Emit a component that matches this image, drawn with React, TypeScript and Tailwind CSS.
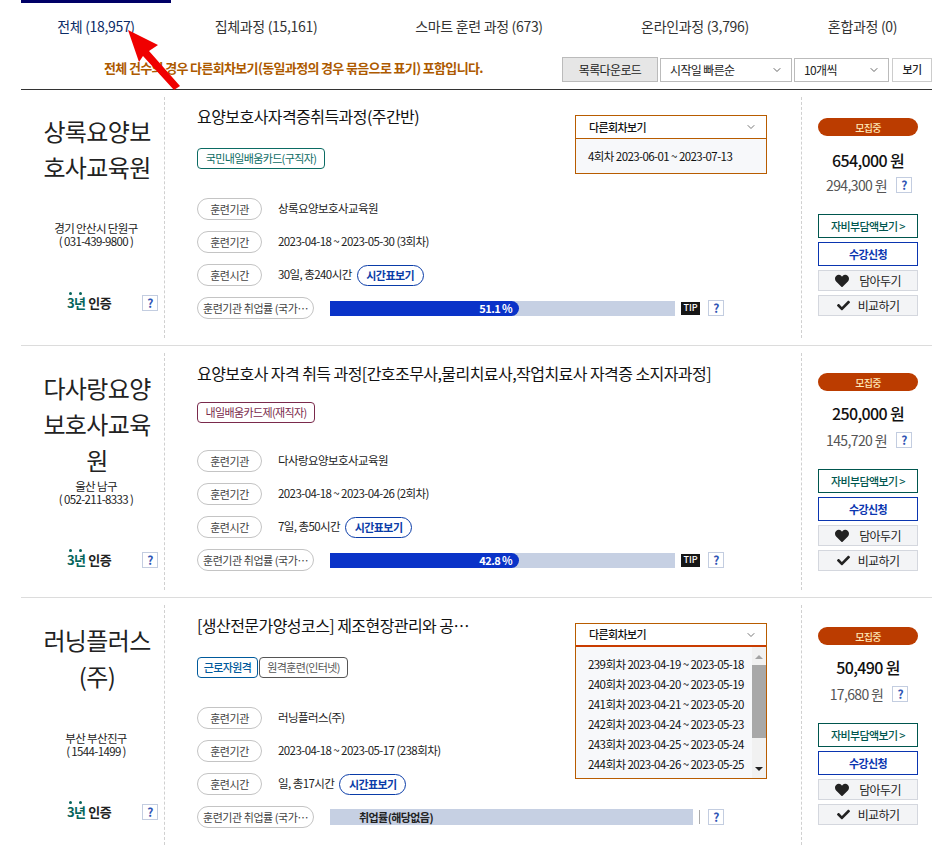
import { ChevronDown } from "lucide-react";
import { FaCheck, FaHeart } from "react-icons/fa";

const tabs = [
  { label: "전체 (18,957)", active: true },
  { label: "집체과정 (15,161)" },
  { label: "스마트 훈련 과정 (673)" },
  { label: "온라인과정 (3,796)" },
  { label: "혼합과정 (0)" },
];

const courses = [
  {
    name: "상록요양보호사교육원",
    address: "경기 안산시 단원구",
    phone: "( 031-439-9800 )",
    title: "요양보호사자격증취득과정(주간반)",
    tags: [{ label: "국민내일배움카드(구직자)", className: "border-[#0b6b63] text-[#0b6b63] w-[128px]" }],
    period: "2023-04-18 ~ 2023-05-30 (3회차)",
    hours: "30일, 총240시간",
    price: "654,000 원",
    sub: "294,300 원",
    rate: "51.1 %",
    rounds: ["4회차 2023-06-01 ~ 2023-07-13"],
    height: "h-[256px]",
    namePad: "pt-[16px]",
    addrGap: "mt-[37px]",
    certGap: "mt-[47px]",
    titlePad: "pt-[15px]",
    tagGap: "mt-[21px]",
    infoGap: "mt-[29px]",
    pricePad: "pt-[21px]",
    priceGap: "mt-[12px]",
    subGap: "mt-[3px]",
  },
  {
    name: "다사랑요양보호사교육원",
    address: "울산 남구",
    phone: "( 052-211-8333 )",
    title: "요양보호사 자격 취득 과정[간호조무사,물리치료사,작업치료사 자격증 소지자과정]",
    tags: [{ label: "내일배움카드제(재직자)", className: "border-[#7a2a4c] text-[#7a2a4c] w-[118px]" }],
    period: "2023-04-18 ~ 2023-04-26 (2회차)",
    hours: "7일, 총50시간",
    price: "250,000 원",
    sub: "145,720 원",
    rate: "42.8 %",
    rounds: [],
    height: "h-[252px]",
    namePad: "pt-[17px]",
    addrGap: "mt-[2px]",
    certGap: "mt-[46px]",
    titlePad: "pt-[16px]",
    tagGap: "mt-[18px]",
    infoGap: "mt-[27px]",
    pricePad: "pt-[20px]",
    priceGap: "mt-[10px]",
    subGap: "mt-[5px]",
  },
  {
    name: "러닝플러스(주)",
    address: "부산 부산진구",
    phone: "( 1544-1499 )",
    title: "[생산전문가양성코스] 제조현장관리와 공정개선 실무 과정",
    tags: [
      { label: "근로자원격", className: "border-[#005a9c] text-[#005a9c] w-[61px] font-medium" },
      { label: "원격훈련(인터넷)", className: "border-[#555] text-[#555] w-[89px]" },
    ],
    period: "2023-04-18 ~ 2023-05-17 (238회차)",
    hours: "일, 총17시간",
    price: "50,490 원",
    sub: "17,680 원",
    rate: "",
    rounds: [
      "239회차 2023-04-19 ~ 2023-05-18",
      "240회차 2023-04-20 ~ 2023-05-19",
      "241회차 2023-04-21 ~ 2023-05-20",
      "242회차 2023-04-24 ~ 2023-05-23",
      "243회차 2023-04-25 ~ 2023-05-24",
      "244회차 2023-04-26 ~ 2023-05-25",
    ],
    height: "h-[254px]",
    namePad: "pt-[17px]",
    addrGap: "mt-[38px]",
    certGap: "mt-[46px]",
    titlePad: "pt-[16px]",
    tagGap: "mt-[21px]",
    infoGap: "mt-[29px]",
    pricePad: "pt-[22px]",
    priceGap: "mt-[10px]",
    subGap: "mt-[5px]",
  },
];

type Course = (typeof courses)[number];

function HelpBox() {
  return (
    <span className="flex h-[16px] w-[16px] shrink-0 items-center justify-center border border-[#c3cde0] text-[12px] font-bold leading-none text-[#2f55b5]">
      ?
    </span>
  );
}

function InfoPill({ label, wide }: { label: string; wide?: boolean }) {
  return (
    <span
      className={
        wide
          ? "flex h-[22px] w-[117px] shrink-0 items-center justify-center rounded-full border border-[#c4c4c4] text-[11px] tracking-[-0.04em] text-[#444]"
          : "flex h-[22px] w-[65px] shrink-0 items-center justify-center rounded-full border border-[#c4c4c4] text-[11px] tracking-[-0.04em] text-[#444]"
      }
    >
      {label}
    </span>
  );
}

function RoundsBox({ rounds }: { rounds: string[] }) {
  const long = rounds.length > 1;
  return (
    <div className="absolute left-[410px] top-[25px] w-[192px] border border-[#b85c00] bg-white">
      <div
        className={
          long
            ? "flex h-[23px] items-center justify-between border-b-2 border-[#c93c00] pl-[13px] pr-[9px] text-[11px] font-medium text-[#111]"
            : "flex h-[23px] items-center justify-between border-b border-[#b85c00] pl-[13px] pr-[9px] text-[11px] font-medium text-[#111]"
        }
      >
        다른회차보기
        <ChevronDown size={12} className="text-[#777]" />
      </div>
      {long ? (
        <div className="flex h-[131px] bg-[#f7f8fa]">
          <ul className="flex-1 pl-[12px] pt-[7px] text-[11.5px] leading-[20px] tracking-[-0.05em] text-[#111]">
            {rounds.map((round) => (
              <li key={round}>{round}</li>
            ))}
          </ul>
          <div className="flex w-[14px] flex-col items-center bg-[#f1f1f1]">
            <span className="mt-[8px] h-0 w-0 border-x-[4px] border-b-[4px] border-x-transparent border-b-[#a3a3a3]" />
            <span className="mt-[6px] h-[73px] w-full bg-[#a8a8a8]" />
            <span className="mt-auto mb-[7px] h-0 w-0 border-x-[4px] border-t-[4px] border-x-transparent border-t-[#222]" />
          </div>
        </div>
      ) : (
        <div className="h-[34px] bg-[#f7f8fa] pl-[12px] pt-[7px] text-[11.5px] leading-[20px] tracking-[-0.05em] text-[#111]">
          {rounds[0]}
        </div>
      )}
    </div>
  );
}

function CourseRow({ course, last }: { course: Course; last?: boolean }) {
  return (
    <div className={`flex ${course.height} ${last ? "" : "border-b border-[#dcdcdc]"}`}>
      <div className="my-[7px] flex w-[144px] shrink-0 flex-col border-r border-dashed border-[#d0d0d0]">
        <div className={`${course.namePad} w-[125px] self-end pr-[9px] text-center text-[24px] leading-[36px] text-[#222] break-all`}>
          <div className="mx-auto w-[116px]">{course.name}</div>
        </div>
        <div className={`${course.addrGap} pl-[7px] text-center text-[11.5px] leading-[13px] text-[#222]`}>
          <div>{course.address}</div>
          <div>{course.phone}</div>
        </div>
        <div className={`${course.certGap} flex h-[16px] items-center justify-between pl-[46px] pr-[6px]`}>
          <span className="flex items-center gap-[3px] text-[13px] font-bold">
            <span className="relative text-[#05655c]">
              3년
              <span className="absolute left-[2px] top-[-1px] h-[3px] w-[3px] rounded-full bg-[#05655c]" />
              <span className="absolute left-[12px] top-[-1px] h-[3px] w-[3px] rounded-full bg-[#05655c]" />
            </span>
            <span className="text-[#222]">인증</span>
          </span>
          <HelpBox />
        </div>
      </div>

      <div className={`relative ${course.titlePad} min-w-0 flex-1 pl-[32px]`}>
        <div
          className={
            course.rounds.length > 1
              ? "w-[277px] truncate text-[16px] leading-[22px] tracking-[-0.035em] text-[#111]"
              : "text-[16px] leading-[22px] tracking-[-0.035em] text-[#111]"
          }
        >
          {course.title}
        </div>
        <div className={`${course.tagGap} flex gap-[1px]`}>
          {course.tags.map((tag) => (
            <span
              key={tag.label}
              className={`flex h-[21px] items-center justify-center rounded-[4px] border text-[11px] ${tag.className}`}
            >
              {tag.label}
            </span>
          ))}
        </div>
        <div className={`${course.infoGap} flex flex-col gap-[11px] text-[11.5px] tracking-[-0.05em] text-[#222]`}>
          <div className="flex items-center gap-[16px]">
            <InfoPill label="훈련기관" />
            {course.name}
          </div>
          <div className="flex items-center gap-[16px]">
            <InfoPill label="훈련기간" />
            {course.period}
          </div>
          <div className="flex items-center gap-[16px]">
            <InfoPill label="훈련시간" />
            <span className="flex items-center gap-[5px]">
              {course.hours}
              <span className="flex h-[21px] w-[67px] items-center justify-center rounded-full border border-[#0a3ca8] text-[11px] font-bold text-[#0a3ca8]">
                시간표보기
              </span>
            </span>
          </div>
          <div className="flex items-center">
            <InfoPill label="훈련기관 취업률 (국가…" wide />
            {course.rate ? (
              <>
                <div className="ml-[16px] h-[15px] w-[345px] bg-[#c6d0e3]">
                  <div className="flex h-full w-[189px] items-center justify-end rounded-r-full bg-[#0a33c8] pr-[7px] text-[11px] font-bold text-white">
                    {course.rate}
                  </div>
                </div>
                <span className="ml-[6px] flex h-[13px] w-[19px] items-center justify-center bg-[#161616] text-[9px] font-medium tracking-normal text-white">
                  TIP
                </span>
                <span className="ml-[8px]">
                  <HelpBox />
                </span>
              </>
            ) : (
              <>
                <div className="ml-[16px] flex h-[16px] w-[363px] items-center bg-[#c6d0e3] pl-[29px] text-[11px] font-bold text-[#222]">
                  취업률(해당없음)
                </div>
                <span className="ml-[6px] h-[14px] w-px bg-[#aaa]" />
                <span className="ml-[8px]">
                  <HelpBox />
                </span>
              </>
            )}
          </div>
        </div>
        {course.rounds.length > 0 && <RoundsBox rounds={course.rounds} />}
      </div>

      <div className={`my-[7px] flex w-[131px] shrink-0 flex-col items-center border-l border-dashed border-[#d0d0d0] pl-[2px] ${course.pricePad}`}>
        <span className="flex h-[18px] w-[100px] items-center justify-center rounded-full bg-[#bb3c00] text-[10px] font-medium text-[#ffe9b8]">
          모집중
        </span>
        <div className={`${course.priceGap} text-[16px] font-medium leading-[24px] text-[#111]`}>{course.price}</div>
        <div className={`${course.subGap} flex h-[20px] items-center gap-[9px] pl-[2px] text-[14px] text-[#555]`}>
          {course.sub}
          <HelpBox />
        </div>
        <div className="mt-[19px] flex w-[100px] flex-col gap-[4px] text-[12px]">
          <span className="flex h-[24px] items-center justify-center border border-[#00564e] text-[11px] font-medium text-[#00564e]">
            자비부담액보기 &gt;
          </span>
          <span className="flex h-[24px] items-center justify-center border border-[#0a35b0] text-[11px] font-bold text-[#0a35b0]">
            수강신청
          </span>
          <span className="flex h-[21px] items-center justify-center gap-[10px] border border-[#d4d7de] bg-[#f3f4f6] text-[#222]">
            <FaHeart size={14} />
            담아두기
          </span>
          <span className="flex h-[21px] items-center justify-center gap-[8px] border border-[#d4d7de] bg-[#f3f4f6] text-[#222]">
            <FaCheck size={13} />
            비교하기
          </span>
        </div>
      </div>
    </div>
  );
}

export default function App() {
  return (
    <div className="relative h-[852px] w-[949px] overflow-hidden bg-white pl-[21px] pr-[17px] [font-family:'Noto_Sans_CJK_KR',sans-serif] tracking-[-0.04em]">
      <div className="grid h-[50px] grid-cols-[150px_190px_236px_196px_139px] tracking-[-0.02em]">
        {tabs.map((tab) => (
          <div
            key={tab.label}
            className={
              tab.active
                ? "flex items-center justify-center border-t-[3px] border-[#000066] text-[14px] text-[#0b2b66]"
                : "flex items-center justify-center pt-[3px] text-[14px] text-[#333]"
            }
          >
            {tab.label}
          </div>
        ))}
      </div>

      <div className="flex h-[40px] items-start justify-between border-b border-[#333] pt-[7px]">
        <span className="ml-[83px] mt-[1px] text-[13px] font-bold leading-[20px] tracking-[-0.05em] text-[#ad5a00]">
          전체 건수의 경우 다른회차보기(동일과정의 경우 묶음으로 표기) 포함입니다.
        </span>
        <div className="flex items-center gap-[2px] text-[12px] text-[#222]">
          <span className="flex h-[25px] w-[96px] items-center justify-center border border-[#bbb] bg-[#e6e6e6]">
            목록다운로드
          </span>
          <span className="flex h-[24px] w-[132px] items-center justify-between border border-[#bbb] pl-[9px] pr-[8px]">
            시작일 빠른순
            <ChevronDown size={12} className="text-[#666]" />
          </span>
          <span className="flex h-[24px] w-[95px] items-center justify-between border border-[#bbb] pl-[9px] pr-[8px]">
            10개씩
            <ChevronDown size={12} className="text-[#666]" />
          </span>
          <span className="ml-px flex h-[24px] w-[40px] items-center justify-center border border-[#ccc] text-[11px] font-medium">
            보기
          </span>
        </div>
      </div>

      {courses.map((course, index) => (
        <CourseRow key={course.name} course={course} last={index === courses.length - 1} />
      ))}

      <svg className="pointer-events-none absolute left-0 top-0" width="200" height="100" viewBox="0 0 200 100">
        <polygon points="128,30 158,45 149,51 180,86 174,90 143,56 139,62" fill="#f00000" />
      </svg>
    </div>
  );
}
